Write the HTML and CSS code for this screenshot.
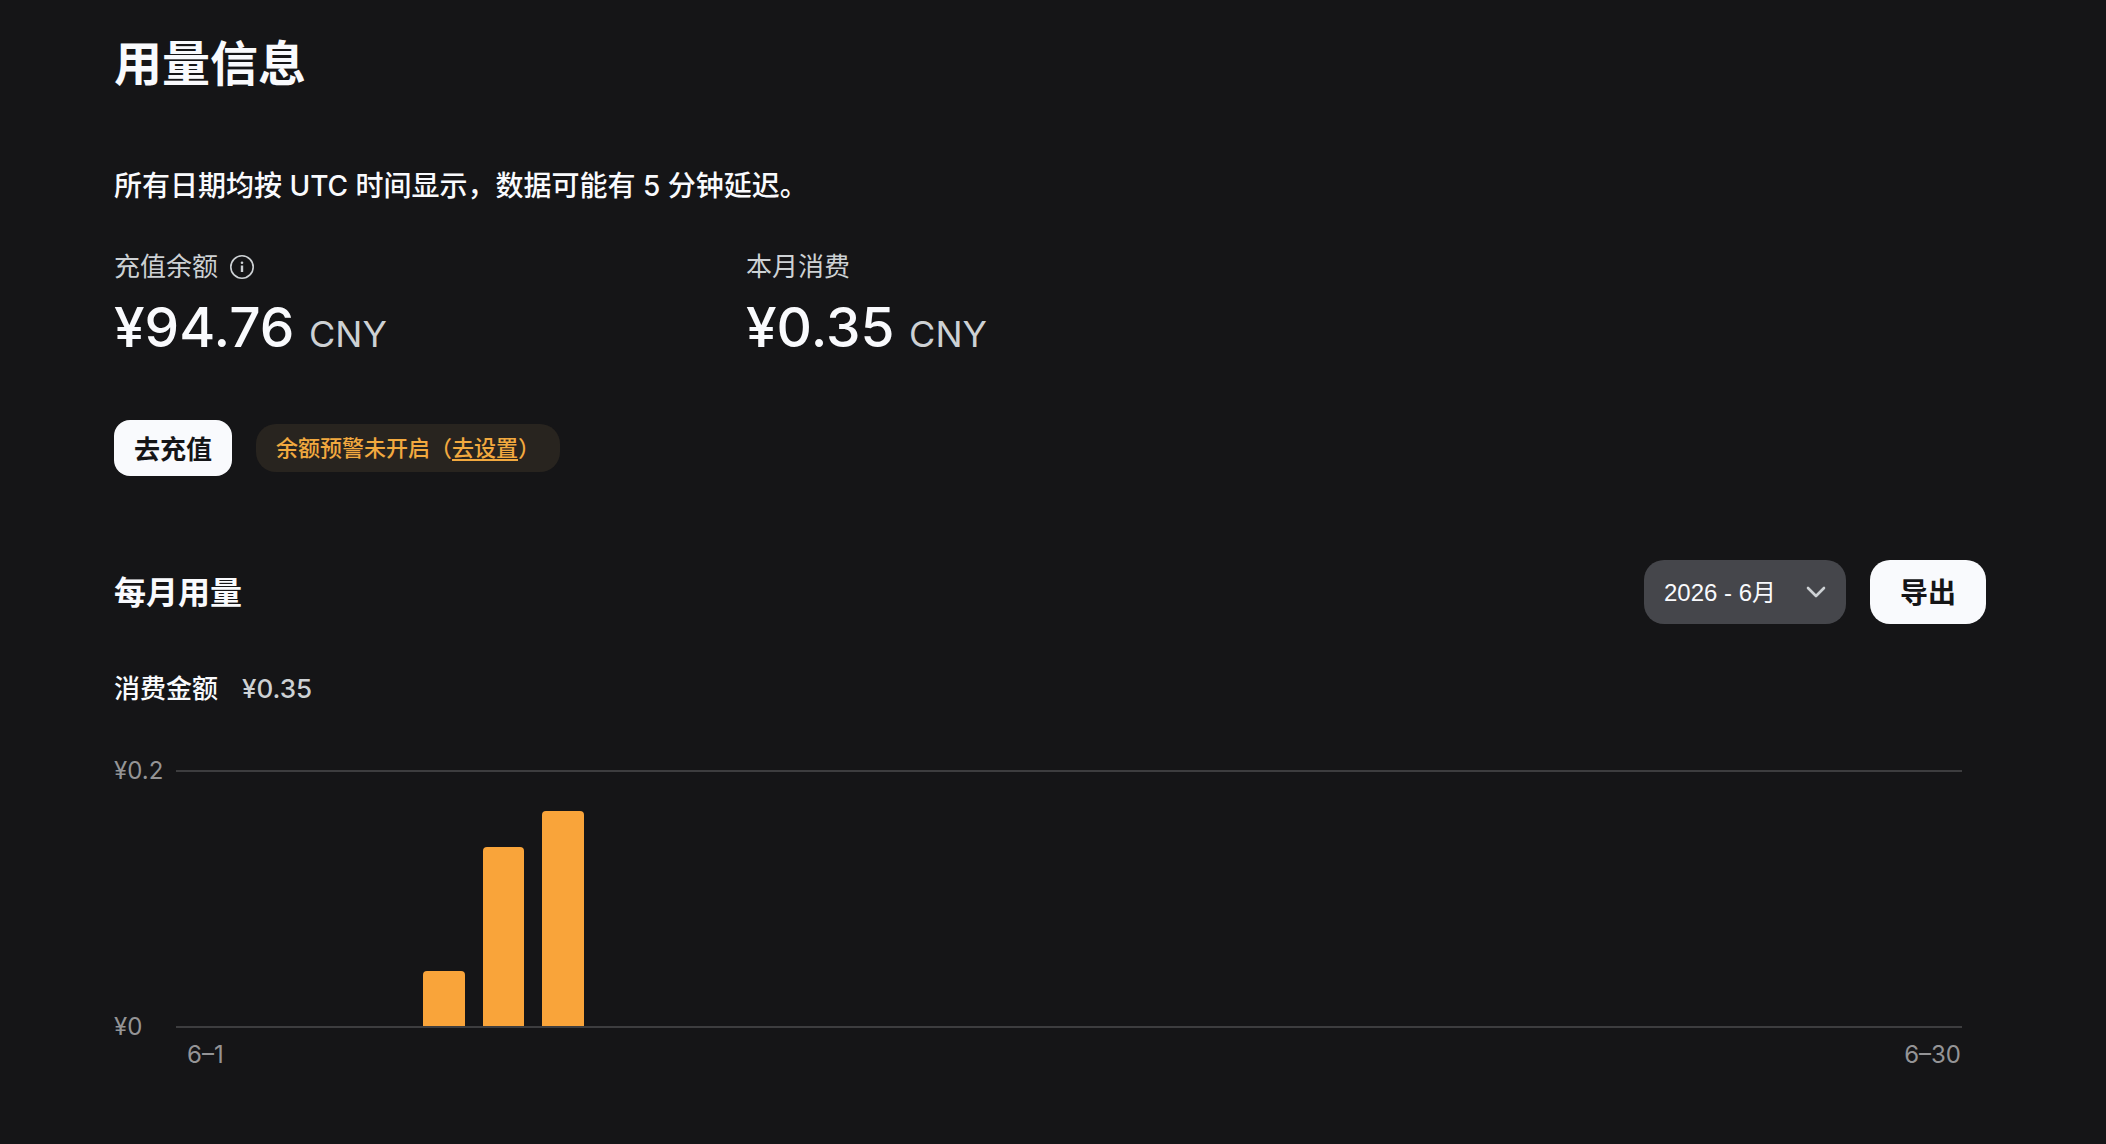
FILE: index.html
```html
<!DOCTYPE html>
<html lang="zh-CN">
<head>
    <meta charset="UTF-8">
    <title>用量信息</title>
    <link rel="stylesheet" href="styles.css">
</head>
<body>
    <main class="page">
        <h1>用量信息</h1>
        <p class="notice">所有日期均按 UTC 时间显示，数据可能有 5 分钟延迟。</p>

        <section class="summary">
            <div class="stat">
                <div class="stat-label">
                    充值余额
                    <svg class="info-icon" viewBox="0 0 24 24" fill="none" stroke="currentColor">
                        <circle cx="12" cy="12" r="11.2" stroke-width="1.6"/>
                        <path d="M12 10.5V17" stroke-width="2.4"/>
                        <circle cx="12" cy="7.8" r="1.3" fill="currentColor" stroke="none"/>
                    </svg>
                </div>
                <div class="stat-value">¥94.76 <span class="currency">CNY</span></div>
            </div>
            <div class="stat">
                <div class="stat-label">本月消费</div>
                <div class="stat-value">¥0.35 <span class="currency">CNY</span></div>
            </div>
        </section>

        <div class="actions">
            <button type="button" class="btn">去充值</button>
            <div class="alert">余额预警未开启（<a href="#">去设置</a>）</div>
        </div>

        <section class="usage">
            <div class="usage-header">
                <h2>每月用量</h2>
                <div class="usage-tools">
                    <div class="month-picker">
                        <select id="month" aria-label="月份">
                            <option>2026 - 6月</option>
                        </select>
                        <svg class="chevron" viewBox="0 0 20 12" fill="none" stroke="currentColor" stroke-width="2.6" stroke-linecap="round" stroke-linejoin="round">
                            <path d="M2 2l8 8 8-8"/>
                        </svg>
                    </div>
                    <button type="button" class="btn btn-export">导出</button>
                </div>
            </div>

            <div class="total">消费金额 <span class="total-value">¥0.35</span></div>

            <div class="chart">
                <div class="y-axis">
                    <span>¥0.2</span>
                    <span>¥0</span>
                </div>
                <div class="plot" id="plot"></div>
                <div class="x-axis">
                    <span>6–1</span>
                    <span>6–30</span>
                </div>
            </div>
        </section>
    </main>

    <script>
        // share of the axis maximum for each day
        const usage = { 5: 21.6, 6: 70.5, 7: 84.8 };
        const plot = document.getElementById('plot');

        for (let day = 1; day <= 30; day++) {
            const slot = document.createElement('div');
            slot.className = 'slot';
            if (usage[day]) {
                const bar = document.createElement('div');
                bar.className = 'bar';
                bar.style.height = `${usage[day]}%`;
                slot.appendChild(bar);
            }
            plot.appendChild(slot);
        }
    </script>
</body>
</html>
```
FILE: styles.css
```css
* {
    box-sizing: border-box;
}
body {
    margin: 0;
    background: #151517;
    color: #f9fafd;
    font-family: Inter, "Noto Sans CJK SC", sans-serif;
}
.page {
    padding: 32px 120px 64px 114px;
}
h1 {
    margin: 0;
    font-size: 48px;
    line-height: 64px;
    font-weight: 600;
}
.notice {
    margin: 70px 0 0;
    font-size: 28px;
    line-height: 40px;
    font-weight: 500;
}
.summary {
    display: grid;
    grid-template-columns: repeat(3, 1fr);
    gap: 24px;
    margin-top: 43px;
}
.stat-label {
    display: flex;
    align-items: center;
    gap: 12px;
    color: #cdd1d4;
    font-size: 26px;
    line-height: 36px;
}
.info-icon {
    width: 24px;
    height: 24px;
}
.stat-value {
    margin-top: 6px;
    font-size: 55px;
    line-height: 72px;
    font-weight: 500;
}
.currency {
    color: #cdd1d4;
    font-size: 36px;
    font-weight: 400;
}
.actions {
    display: flex;
    align-items: center;
    gap: 24px;
    margin-top: 50px;
}
.btn {
    height: 56px;
    padding: 0 20px 2px;
    border: none;
    border-radius: 16px;
    background: #f9fafd;
    color: #151517;
    font-family: inherit;
    font-size: 26px;
    font-weight: 600;
    cursor: pointer;
}
.btn-export {
    height: 64px;
    padding: 0 30px 2px;
    border-radius: 20px;
    font-size: 28px;
}
.alert {
    padding: 0 20px;
    border-radius: 20px;
    background: #28241f;
    color: #f2a93f;
    font-size: 22px;
    line-height: 48px;
    font-weight: 500;
}
.alert a {
    color: inherit;
    text-underline-offset: 3px;
}
.usage {
    margin-top: 84px;
}
.usage-header {
    display: flex;
    align-items: center;
    justify-content: space-between;
}
h2 {
    margin: 0;
    padding-bottom: 4px;
    font-size: 32px;
    font-weight: 600;
}
.usage-tools {
    display: flex;
    gap: 24px;
}
.month-picker {
    position: relative;
}
.month-picker select {
    width: 202px;
    height: 64px;
    padding: 0 20px;
    border: none;
    border-radius: 20px;
    appearance: none;
    background: #45464b;
    color: #f9fafd;
    font-family: "Liberation Sans", "Noto Sans CJK SC", sans-serif;
    font-size: 24px;
}
.chevron {
    position: absolute;
    top: 26px;
    right: 20px;
    width: 20px;
    height: 12px;
    color: #cdd1d4;
    pointer-events: none;
}
.total {
    display: flex;
    gap: 24px;
    margin-top: 47px;
    font-size: 26px;
    line-height: 36px;
    font-weight: 500;
}
.total-value {
    color: #cdd1d4;
}
.chart {
    display: grid;
    grid-template-columns: 62px 1fr;
    margin: 63px 24px 0 0;
    color: #949496;
    font-size: 24px;
    line-height: 32px;
}
.y-axis {
    display: flex;
    flex-direction: column;
    justify-content: space-between;
    margin: -15px 0;
}
.plot {
    display: flex;
    height: 258px;
    border-top: 2px solid #3d3d3f;
    border-bottom: 2px solid #3d3d3f;
}
.slot {
    flex: 1;
    display: flex;
    align-items: flex-end;
    justify-content: center;
}
.bar {
    width: 70%;
    border-radius: 4px 4px 0 0;
    background: #f9a43a;
}
.x-axis {
    grid-column: 2;
    display: flex;
    justify-content: space-between;
    padding: 0 1px 0 11px;
    margin-top: 11px;
}
```
